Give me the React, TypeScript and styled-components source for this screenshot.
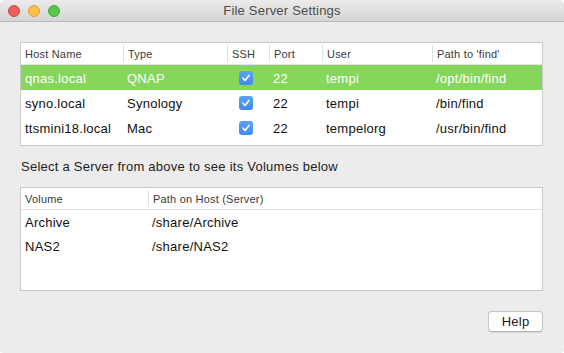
import React from "react";
import styled, { createGlobalStyle } from "styled-components";

const GlobalStyle = createGlobalStyle`
  html, body {
    margin: 0;
    padding: 0;
    background: #ffffff;
  }
  * {
    box-sizing: border-box;
  }
`;

type Server = {
  host: string;
  type: string;
  ssh: boolean;
  port: number;
  user: string;
  path: string;
};

const servers: Server[] = [
  { host: "qnas.local", type: "QNAP", ssh: true, port: 22, user: "tempi", path: "/opt/bin/find" },
  { host: "syno.local", type: "Synology", ssh: true, port: 22, user: "tempi", path: "/bin/find" },
  { host: "ttsmini18.local", type: "Mac", ssh: true, port: 22, user: "tempelorg", path: "/usr/bin/find" },
];

const volumes = [
  { name: "Archive", path: "/share/Archive" },
  { name: "NAS2", path: "/share/NAS2" },
];

const serverCols = "102px 104px 42px 53px 110px 1fr";
const volumeCols = "127px 1fr";

const App = () => {
  const selected = 0;

  return (
    <>
      <GlobalStyle />
      <Window>
        <TitleBar>
          <Lights>
            <Light color="#ee5f5b" edge="#d8473f" />
            <Light color="#f8bf4a" edge="#dca32f" />
            <Light color="#5ac54d" edge="#42a837" />
          </Lights>
          <Title>File Server Settings</Title>
        </TitleBar>
        <Body>
          <Table height={104}>
            <HeaderRow cols={serverCols}>
              <HeaderCell>Host Name</HeaderCell>
              <HeaderCell sep>Type</HeaderCell>
              <HeaderCell sep>SSH</HeaderCell>
              <HeaderCell sep>Port</HeaderCell>
              <HeaderCell sep>User</HeaderCell>
              <HeaderCell sep>Path to 'find'</HeaderCell>
            </HeaderRow>
            {servers.map((s, i) => (
              <Row key={s.host} cols={serverCols} rowHeight={25} selected={i === selected}>
                <Cell>{s.host}</Cell>
                <Cell>{s.type}</Cell>
                <CheckCell>
                  <Checkbox>
                    {s.ssh && (
                      <svg width="10" height="10" viewBox="0 0 10 10">
                        <path
                          d="M2 5.2 L4.1 7.4 L8 2.4"
                          fill="none"
                          stroke="#fff"
                          strokeWidth="1.6"
                          strokeLinecap="round"
                          strokeLinejoin="round"
                        />
                      </svg>
                    )}
                  </Checkbox>
                </CheckCell>
                <Cell>{s.port}</Cell>
                <Cell>{s.user}</Cell>
                <Cell>{s.path}</Cell>
              </Row>
            ))}
          </Table>

          <Hint>Select a Server from above to see its Volumes below</Hint>

          <Table height={104}>
            <HeaderRow cols={volumeCols}>
              <HeaderCell>Volume</HeaderCell>
              <HeaderCell sep>Path on Host (Server)</HeaderCell>
            </HeaderRow>
            {volumes.map((v) => (
              <Row key={v.name} cols={volumeCols} rowHeight={24}>
                <Cell>{v.name}</Cell>
                <Cell>{v.path}</Cell>
              </Row>
            ))}
          </Table>

          <Footer>
            <Button>Help</Button>
          </Footer>
        </Body>
      </Window>
    </>
  );
};

const Window = styled.div`
  width: 564px;
  height: 353px;
  display: flex;
  flex-direction: column;
  background: #ececec;
  border-radius: 5px 5px 4px 4px;
  overflow: hidden;
  font-family: "Liberation Sans", Arial, sans-serif;
  color: #1a1a1a;
`;

const TitleBar = styled.div`
  height: 22px;
  flex: none;
  display: flex;
  align-items: center;
  justify-content: center;
  position: relative;
  background: linear-gradient(#ebebeb, #d5d5d5);
  border-bottom: 1px solid #b9b9b9;
`;

const Lights = styled.div`
  position: absolute;
  left: 8px;
  top: 5px;
  display: flex;
  gap: 8px;
`;

const Light = styled.span<{ color: string; edge: string }>`
  width: 12px;
  height: 12px;
  border-radius: 50%;
  background: ${({ color }) => color};
  border: 0.5px solid ${({ edge }) => edge};
`;

const Title = styled.div`
  font-size: 13px;
  color: #4c4c4c;
  letter-spacing: 0.2px;
`;

const Body = styled.div`
  flex: 1;
  display: flex;
  flex-direction: column;
  padding: 20px 21px 0 20px;
`;

const Table = styled.div<{ height: number }>`
  height: ${({ height }) => height}px;
  background: #fff;
  border: 1px solid #c9c9c9;
  display: flex;
  flex-direction: column;
`;

const HeaderRow = styled.div<{ cols: string }>`
  display: grid;
  grid-template-columns: ${({ cols }) => cols};
  height: 22px;
  flex: none;
  border-bottom: 1px solid #e4e4e4;
`;

const HeaderCell = styled.div<{ sep?: boolean }>`
  align-self: center;
  height: 17px;
  display: flex;
  align-items: center;
  padding-left: 4px;
  border-left: ${({ sep }) => (sep ? "1px solid #e0e0e0" : "none")};
  font-size: 11px;
  color: #3a3a3a;
  letter-spacing: 0.2px;
  white-space: nowrap;
`;

const Row = styled.div<{ cols: string; rowHeight: number; selected?: boolean }>`
  display: grid;
  grid-template-columns: ${({ cols }) => cols};
  height: ${({ rowHeight }) => rowHeight}px;
  flex: none;
  align-items: center;
  background: ${({ selected }) => (selected ? "#86d65c" : "transparent")};
  color: ${({ selected }) => (selected ? "#ffffff" : "#111111")};
`;

const Cell = styled.div`
  padding-left: 4px;
  padding-top: 1px;
  font-size: 13px;
  letter-spacing: 0.25px;
  white-space: nowrap;
  overflow: hidden;
`;

const CheckCell = styled.div`
  display: flex;
  padding-left: 12px;
`;

const Checkbox = styled.span`
  width: 14px;
  height: 14px;
  border-radius: 3px;
  background: linear-gradient(#5aa2f8, #3f89f3);
  display: flex;
  align-items: center;
  justify-content: center;
`;

const Hint = styled.div`
  margin: 13px 0 12px 1px;
  height: 16px;
  line-height: 16px;
  font-size: 13px;
  letter-spacing: 0.25px;
  color: #222;
`;

const Footer = styled.div`
  display: flex;
  justify-content: flex-end;
  margin-top: 20px;
`;

const Button = styled.button`
  width: 55px;
  height: 21px;
  background: #fff;
  border: 1px solid #c6c6c6;
  border-bottom-color: #b3b3b3;
  border-radius: 4px;
  font-family: "Liberation Sans", Arial, sans-serif;
  font-size: 13px;
  letter-spacing: 0.25px;
  color: #1a1a1a;
  padding: 0;
  box-shadow: 0 0.5px 1px rgba(0, 0, 0, 0.08);
`;

export default App;
